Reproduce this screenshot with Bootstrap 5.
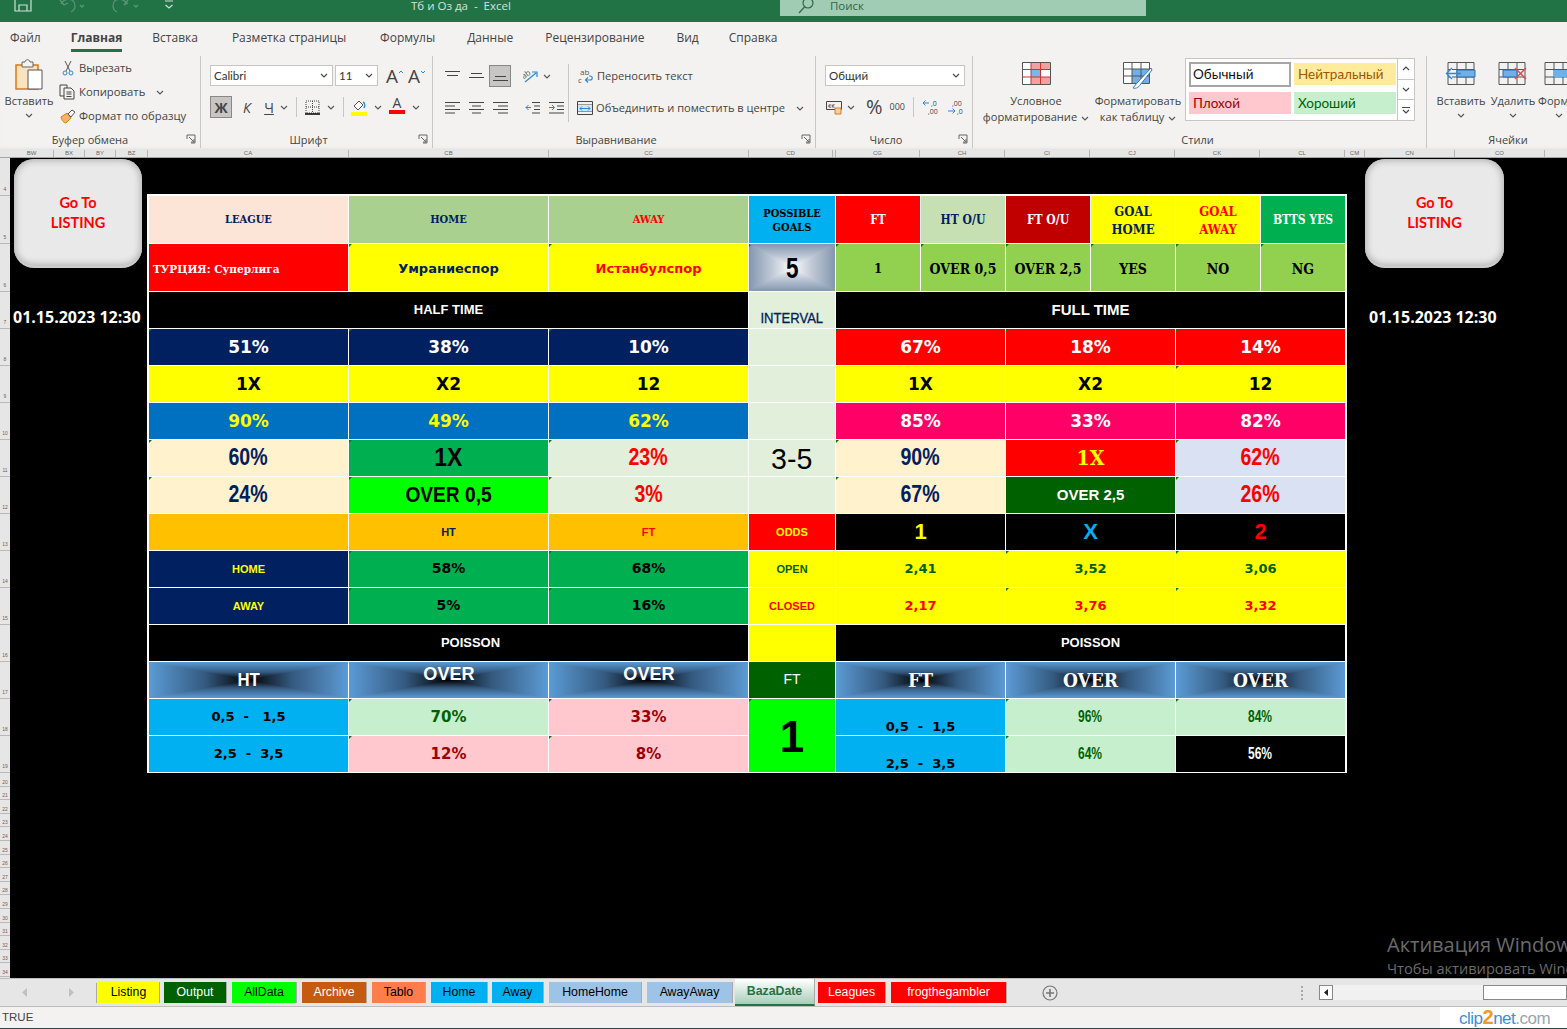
<!DOCTYPE html>
<html lang="ru">
<head>
<meta charset="utf-8">
<title>Excel</title>
<link href="https://cdn.jsdelivr.net/npm/bootstrap@5.3.0/dist/css/bootstrap.min.css" rel="stylesheet">
<style>
html,body{margin:0;height:100%;overflow:hidden;background:#000}
body{font-family:"Open Sans","Noto Sans",sans-serif;font-size:12px;color:#444}
.app{width:1567px;height:1029px;overflow:hidden}
.titlebar{height:22px;background:#217346;color:#d3e3da;flex:none;overflow:hidden}
.tb-icons{width:411px;padding-left:14px;gap:24px;margin-top:-8px}
.tb-title{width:369px;font-size:11.5px;line-height:12px}
.tb-search{width:366px;height:16px;background:#9fccb3;color:#33654c;font-size:11.5px;line-height:12px;padding-left:18px;gap:12px}
.tabsrow{height:30px;background:#f3f2f1;padding:2px 0 0 10px;gap:30px;font-size:12px;flex:none;color:#444}
.tabsrow .on{font-weight:700;color:#444;border-bottom:3px solid #217346;height:26px;margin-top:2px;line-height:24px}
.tg2{margin-left:2px}
.ribbon{height:98px;background:#f3f2f1;flex:none;box-shadow:inset 0 -3px 3px -2px #ddd}
.rg{height:92px;margin-top:4px;border-right:1px solid #c8c6c4;flex:none}
.rg1{width:201px}.rg2{width:232px}.rg3{width:383px}.rg4{width:157px}.rg5{width:454px}.rg6{width:140px;border-right:0}
.rgbody{height:74px;flex:none}
.rglab{height:16px;font-size:11px;line-height:15px;display:grid;grid-template-columns:1fr auto 1fr;align-items:center;color:#444;margin-right:4px;margin-top:1px}
.lp12{padding-right:12px}.lp16{padding-right:16px}.lc26{padding-left:26px}
.lnch{justify-self:end;display:flex}
.bigbtn{display:flex;flex-direction:column;align-items:center;text-align:center;line-height:16px;font-size:11.1px;color:#444}
.chev{flex:none}
.pastebtn{width:48px;margin:3px 0 0 5px}
.pastebtn .lbl{margin-top:2px}
.clipcol{margin:3px 0 0 6px;gap:6px}
.cliprow{height:18px;gap:3px;font-size:11.3px;white-space:nowrap}
.clipic{width:17px;display:flex;justify-content:center}
.fontcol{padding:9px 0 0 9px}
.sel{background:#fff;border:1px solid #c8c6c4;height:21px;padding:0 4px 0 3px;font-size:11.5px;color:#333;font-family:"Lato",sans-serif}
.sel-font{width:123px}.sel-size{width:43px;margin-left:2px}.sel-num{width:140px;margin:9px 0 0 9px}
.fa{font-size:19px;line-height:20px;font-family:"Open Sans",sans-serif;color:#444;position:relative;display:flex;flex:none}
.faa{margin-left:8px;width:22px}.faa2{margin-left:0;width:20px}
.frow2{height:22px;margin-top:10px}
.tbtn{width:22px;height:22px;display:flex;align-items:center;justify-content:center;flex:none;font-size:14px}
.tbtn.act{background:#c8c6c4;border:1px solid #8a8886}
.vsep{width:1px;height:20px;background:#c8c6c4;flex:none}
.aligncol{padding:9px 0 0 7px}
.arow{height:22px}
.arow+.arow{margin-top:10px}
.aic{width:24px;display:flex;justify-content:center;flex:none}
.albox{width:22px;height:22px;background:#c8c6c4;border:1px solid #8a8886;display:flex;align-items:center;justify-content:center;margin-left:1px}
.alsep{width:1px;height:58px;background:#c8c6c4;margin:8px 8px 0 0}
.wraptxt{font-size:11.1px;white-space:nowrap;gap:3px}
.num2{height:22px;margin:10px 0 0 10px}
.pcts{font-size:20px;line-height:1;margin-left:11px}
.thou{font-size:9px;margin-left:7px}
.cfbtn{width:112px;margin:6px 0 0 7px}
.ftbtn{width:92px;margin:6px 0 0 0}
.gal{width:230px;height:63px;margin:2px 0 0 1px;background:#fff;border:1px solid #c8c6c4;font-family:"Lato",sans-serif;font-size:13.5px}
.galgrid{display:grid;grid-template-columns:102px 102px;gap:5px 3px;align-content:start;padding:4px 0 0 3px;width:212px}
.gst{height:22px;line-height:22px;padding-left:4px}
.gst0{background:#fff;outline:2px solid #a6a6a6;outline-offset:-2px;color:#111;margin-top:-1px;height:25px;line-height:25px}
.gst1{background:#ffeb9c;color:#9c5700}.gst2{background:#ffc7ce;color:#9c0006}.gst3{background:#c6efce;color:#006100}
.galsb{width:17px;border-left:1px solid #c8c6c4;margin-left:auto}
.galsb div{flex:1;display:flex;align-items:center;justify-content:center;border-bottom:1px solid #c8c6c4}
.galsb div:last-child{border-bottom:0}
.cellbtn{width:52px;margin:6px 0 0 0;flex:none}
.cellbtn3{margin-left:-6px}
.cellsbody{padding-left:8px}
.colhead{height:8px;background:#e6e6e6;border-bottom:1px solid #a6a6a6;flex:none;font-size:6px;line-height:7px;color:#666;padding-left:10px;font-family:"Liberation Sans",sans-serif}
.colhead div{border-right:1px solid #b5b5b5;text-align:center;flex:none;overflow:hidden}
.w44{width:44px}.w31{width:31px}.w32{width:32px}.w201{width:201px}.w200{width:200px}.w84{width:84px}.w3{width:3px}.w85{width:85px}.w20{width:20px}.w90{width:90px}
.sheet{height:820px;background:#000;flex:none;position:relative;overflow:hidden}
.rowhead{width:10px;background:#e6e6e6;flex:none;font-size:5px;color:#854;font-family:"Liberation Sans",sans-serif}
.rh{border-bottom:1px solid #b8b8b8;height:37px;display:flex;align-items:flex-end;justify-content:center;line-height:7px;padding-bottom:2px}
.rh0{height:38px}.rh1{height:48px}.rhs{height:13.6px;padding-bottom:0}
.side-l{width:137px;flex:none;padding-left:4px}
.side-r{width:138px;flex:none;margin-left:18px}
.gobtn{width:128px;height:109px;margin-top:1px;background:#e9e9e9;border-radius:20px;box-shadow:inset 0 0 6px 2px #b5b5b5;border-bottom:2px solid #ccc;color:#f00;font-family:"Lato",sans-serif;font-weight:700;font-size:14.5px;line-height:20px;text-align:center;padding-top:34px}
.side-r .gobtn{width:139px}
.stamp{color:#fff;font-family:"Open Sans",sans-serif;font-weight:700;font-size:16px;margin-top:39px;line-height:20px;white-space:nowrap}
.side-l .stamp{margin-left:-1px}
.side-r .stamp{margin-left:4px}
.xboard{display:grid;grid-template-columns:199px 199px 199px 86px repeat(6,84px);grid-template-rows:47px 47px repeat(13,36px);gap:1px;background:#fff;padding:2px;width:1200px;height:579px;margin:36px 0 0 0;flex:none;align-self:flex-start}
.c{display:flex;align-items:center;justify-content:center;text-align:center;position:relative;overflow:hidden;white-space:nowrap;line-height:1.1}
.s3{grid-column:span 3}.s6{grid-column:span 6}.s2{grid-column:span 2}.r2{grid-row:span 2}
.t::before{content:"";position:absolute;left:0;top:0;border-style:solid;border-width:3px 3px 0 0;border-color:#008000 transparent transparent transparent}
.slab{font-family:"DejaVu Serif Condensed","DejaVu Serif",serif;font-weight:700}
.wide{font-family:"DejaVu Sans",sans-serif;font-weight:700}
.narrow{font-family:"Liberation Sans",sans-serif;font-weight:700}
.arial{font-family:"Liberation Sans",sans-serif;font-weight:700}
.sq{display:inline-block}
.f11{font-size:11px}.f117{font-size:11.7px}.f12{font-size:12px}.f13{font-size:13px}.f14{font-size:14px}.f15{font-size:15px}.f17{font-size:17px}.f19{font-size:19px}
.hd{padding-top:2px}
.numb{font-size:23px}.numb .sq{transform:scaleX(.85)}
.bigx{font-size:25px}.bigx .sq{transform:scaleX(.92)}
.overb{font-size:22px}.overb .sq{transform:scaleX(.87)}
.tfive{font-size:30px;font-weight:400}.tfive .sq{transform:scaleX(.95)}
.five{font-size:30px}.five .sq{transform:scaleX(.75)}
.intv{font-size:14.5px;font-weight:400;-webkit-text-stroke:.3px currentColor}.intv .sq{transform:scaleX(.9)}
.ovr{font-size:19px}.ovr .sq{transform:scaleX(.95)}
.htt{font-size:19px}.htt .sq{transform:scaleX(.88)}
.pctn{font-size:16px}.pctn .sq{transform:scaleX(.75)}
.slabx{font-family:"DejaVu Serif Condensed","DejaVu Serif",serif;font-weight:700;font-size:21px}
.xl{font-size:22px}
.huge{font-size:44px}
.lh18{line-height:18px}.lh14{line-height:14px}
.bgleague{background:#fce4d6;color:#002060}.bgsage{background:#a9d08e;color:#002060}.bgsage2{background:#c6e0b4;color:#002060}.bgbrick{background:#c00000;color:#fff}.bgbtts{background:#00b050;color:#fff}.bgint{background:#e2efda;color:#002060}
.bgk{background:#000;color:#fff}.bgn{background:#002060;color:#fff}.bgy{background:#ff0;color:#000}.bgr{background:#f00;color:#fff}
.bgblue{background:#0070c0;color:#ff0}.bgrose{background:#f06;color:#fff}.bgcream{background:#fff2cc;color:#002060}
.bgg{background:#00b050;color:#000}.bgmint{background:#e2efda;color:#f00}.bgsky{background:#d9e1f2;color:#f00}
.bgamb{background:#ffc000;color:#002060}.bgcy{background:#00b0f0;color:#000}.bgpa{background:#c6efce;color:#006100}.bgpi{background:#ffc7ce;color:#9c0006}
.bgdg{background:#006100;color:#fff}.bglime{background:#0f0;color:#000}.bgol{background:#92d050;color:#000}
.box{background:linear-gradient(90deg,var(--e),var(--m) 28%,var(--k) 50%,var(--m) 72%,var(--e))}
.box::after{content:"";position:absolute;inset:0;background:linear-gradient(180deg,var(--e),var(--m) 28%,var(--k) 50%,var(--m) 72%,var(--e));clip-path:polygon(0 0,100% 0,0 100%,100% 100%)}
.box>span{position:relative;z-index:1}
.boxb{--e:#5b9bd5;--m:#355a80;--k:#000;color:#fff}
.boxs{--e:#8497b0;--m:#c2cbd8;--k:#fff;color:#000}
.pt{align-items:flex-end;padding-bottom:1px}
.ptop{align-items:flex-start;padding-top:2px}
.pois{padding-left:44px}
.tx-y{color:#ff0}.tx-r{color:#f00}.tx-n{color:#002060}.tx-g{color:#006100}.tx-c{color:#00b0f0}.tx-k{color:#000}
.wm{position:absolute;left:1387px;top:774px;color:#6b6b6b;white-space:nowrap;font-family:"Open Sans",sans-serif;pointer-events:none}
.wm1{font-size:20px;line-height:26px}.wm2{font-size:14.6px;line-height:20px}
.sheettabs{height:29px;background:#e6e6e6;border-top:1px solid #bdbdbd;border-bottom:1px solid #bdbdbd;flex:none;font-family:"Liberation Sans",sans-serif;font-size:12.3px}
.navarr{width:97px;flex:none;gap:42px;padding-left:22px;border-right:1px solid #aaa;height:20px}
.st{height:21px;line-height:20px;text-align:center;margin-left:1px;flex:none;border-right:1px solid #aaa;box-shadow:2px 0 0 #e6e6e6}
.st1{width:62px;background:#ff0;color:#000;margin-right:3px}.st2{width:63px;background:#006100;color:#fff;margin-right:4px}.st3{width:65px;background:#0f0;color:#000;margin-right:4px}.st4{width:65px;background:#c55a11;color:#fff;margin-right:4px}.st5{width:54px;background:#ff7c4c;color:#000;margin-right:4px}.st6{width:57px;background:#00b0f0;color:#000;margin-right:3px}.st7{width:52px;background:#00b0f0;color:#000;margin-right:4px}.st8{width:93px;background:#9dc3e6;color:#000;margin-right:4px}.st9{width:86px;background:#9dc3e6;color:#000;margin-right:1px}
.sta{width:80px;height:27px;line-height:25px;background:linear-gradient(180deg,#fff,#a9cdb9);color:#217346;font-weight:700;border-bottom:2px solid #217346;margin-top:0;margin-right:2px}
.stb{width:68px;background:#f00;color:#fff;margin-right:4px}.stc{width:116px;background:#f00;color:#fff}
.addb{margin-left:35px;width:259px;flex:none}
.gdots{width:3px;height:14px;border-left:2px dotted #aaa;flex:none;margin-right:15px}
.hscroll{flex:1;height:15px;background:#f1f1f1}
.harr{width:14px;height:15px;background:#fff;border:1px solid #8a8886;display:flex;align-items:center;justify-content:center}
.hthumb{width:84px;height:15px;background:#fff;border:1px solid #8a8886;margin-left:auto}
.statusbar{height:22px;background:#f3f2f1;border-bottom:1px solid #2a4a4a;flex:none;font-family:"Liberation Sans",sans-serif;font-size:11.5px;color:#444;padding-left:2px}
.clip{margin-left:auto;width:127px;height:21px;background:#fff;font-family:"Liberation Sans",sans-serif;font-size:17px;letter-spacing:-.5px;padding-left:19px;line-height:21px;font-weight:400}
.cl-b{color:#3a8fd9}.cl-o{color:#f39a1e;font-weight:700;font-size:20px}.cl-g{color:#9aa5ad}
</style>
</head>
<body>
<div class="app d-flex flex-column">
  <div class="titlebar d-flex">
    <div class="tb-icons d-flex align-items-start">
      <svg width="18" height="22" viewBox="0 0 18 22" fill="none" stroke="#cfe0d6" stroke-width="1.2"><path d="M1 1h13l3 3v15H1z"/><path d="M5 19v-6h8v6M5 1v5h8V1"/></svg>
      <svg width="30" height="22" viewBox="0 0 30 22" fill="none" stroke="#5c9477" stroke-width="1.3"><path d="M4 8l4 5 4-2M5 12c4-7 14-6 14 2 0 3-2 5-4 6"/><path d="M24 13l2 2 2-2"/></svg>
      <svg width="30" height="22" viewBox="0 0 30 22" fill="none" stroke="#5c9477" stroke-width="1.3"><path d="M18 8l-4 5 4-2M17 12C13 5 3 6 3 14c0 3 2 5 4 6"/><path d="M24 13l2 2 2-2"/></svg>
      <svg width="10" height="22" viewBox="0 0 10 22" fill="none" stroke="#cfe0d6" stroke-width="1.2"><path d="M1 9h8M1.5 13l3.5 3 3.500-3"/></svg>
    </div>
    <div class="tb-title text-nowrap">Тб и Оз да&nbsp; -&nbsp; Excel</div>
    <div class="tb-search d-flex">
      <svg width="16" height="16" viewBox="0 0 16 16" fill="none" stroke="#33654c" stroke-width="1.2" class="mt-n1"><circle cx="10" cy="3" r="5"/><path d="M6.500 7L1 13"/></svg>
      <span class="ms-1">Поиск</span>
    </div>
  </div>

  <div class="tabsrow d-flex align-items-center">
    <span>Файл</span><span class="on">Главная</span><span>Вставка</span><span class="ms-1">Разметка страницы</span><span class="ms-1">Формулы</span><span class="tg2">Данные</span><span class="tg2">Рецензирование</span><span class="tg2">Вид</span><span>Справка</span>
  </div>

  <div class="ribbon d-flex">
    <!-- clipboard -->
    <div class="rg rg1 d-flex flex-column">
      <div class="rgbody d-flex">
        <div class="bigbtn pastebtn">
          <svg width="30" height="32" viewBox="0 0 30 32"><path d="M2 6h22v24H2z" fill="#fbe3c0" stroke="#d97a14" stroke-width="1.500"/><path d="M8 3h3c0-3 5-3 5 0h3v5H8z" fill="#f3f2f1" stroke="#666"/><path d="M14 11h14v19H14z" fill="#fff" stroke="#555"/></svg>
          <span class="lbl">Вставить</span>
          <svg class="chev mt-1" width="8" height="5" viewBox="0 0 8 5" fill="none" stroke="#555" stroke-width="1.100"><path d="M1 1l3 3 3-3"/></svg>
        </div>
        <div class="clipcol d-flex flex-column">
          <div class="cliprow d-flex align-items-center"><span class="clipic"><svg width="12" height="16" viewBox="0 0 12 16" fill="none" stroke="#555"><path d="M3 1l5 10M9 1L4 11"/><circle cx="3" cy="13" r="2" stroke="#2b88d8"/><circle cx="9" cy="13" r="2" stroke="#2b88d8"/></svg></span><span>Вырезать</span></div>
          <div class="cliprow d-flex align-items-center"><span class="clipic"><svg width="17" height="16" viewBox="0 0 17 16" fill="none" stroke="#444"><path d="M5 12H1V1h7v3"/><path d="M5 4h7l3 3v8H5zM7.500 8h5M7.500 10h5M7.500 12.500h5"/></svg></span><span>Копировать</span><svg class="ms-2" width="8" height="5" viewBox="0 0 8 5" fill="none" stroke="#555" stroke-width="1.100"><path d="M1 1l3 3 3-3"/></svg></div>
          <div class="cliprow d-flex align-items-center"><span class="clipic"><svg width="16" height="15" viewBox="0 0 16 15"><path d="M1 8l6-4 4 5-5 5c-2 0-4-2-5-6z" fill="#f6b26b" stroke="#d97a14"/><path d="M8 5l4-4 3 2-4 5z" fill="#fff" stroke="#555"/></svg></span><span>Формат по образцу</span></div>
        </div>
      </div>
      <div class="rglab"><span></span><span class="lp16">Буфер обмена</span><span class="lnch"><svg width="10" height="10" viewBox="0 0 10 10" fill="none" stroke="#666"><path d="M1 5V1h8v8H5M3 3l5 5M8 5v3H5"/></svg></span></div>
    </div>
    <!-- font -->
    <div class="rg rg2 d-flex flex-column">
      <div class="rgbody fontcol">
        <div class="d-flex align-items-center">
          <div class="sel sel-font d-flex align-items-center justify-content-between"><span>Calibri</span><svg width="8" height="5" viewBox="0 0 8 5" fill="none" stroke="#444" stroke-width="1.100"><path d="M1 1l3 3 3-3"/></svg></div>
          <div class="sel sel-size d-flex align-items-center justify-content-between"><span>11</span><svg width="8" height="5" viewBox="0 0 8 5" fill="none" stroke="#444" stroke-width="1.100"><path d="M1 1l3 3 3-3"/></svg></div>
          <span class="fa faa">A<svg width="6" height="4" viewBox="0 0 6 4" fill="none" stroke="#2b88d8" class="mt-1"><path d="M1 3l2-2 2 2"/></svg></span>
          <span class="fa faa2">A<svg width="6" height="4" viewBox="0 0 6 4" fill="none" stroke="#2b88d8" class="mt-1"><path d="M1 1l2 2 2-2"/></svg></span>
        </div>
        <div class="frow2 d-flex align-items-center">
          <span class="tbtn act fw-bold">Ж</span>
          <span class="tbtn ms-1 fst-italic">К</span>
          <span class="tbtn text-decoration-underline">Ч</span>
          <svg class="chev" width="8" height="5" viewBox="0 0 8 5" fill="none" stroke="#555" stroke-width="1.100"><path d="M1 1l3 3 3-3"/></svg>
          <span class="vsep ms-2"></span>
          <span class="tbtn ms-1"><svg width="15" height="15" viewBox="0 0 15 15" fill="none" stroke="#444" stroke-dasharray="1 1"><path d="M1 1h13v12H1zM7.500 1v12M1 7h13"/><path d="M0 14h15" stroke="#000" stroke-dasharray="none" stroke-width="1.500"/></svg></span>
          <svg class="chev ms-1" width="8" height="5" viewBox="0 0 8 5" fill="none" stroke="#555" stroke-width="1.100"><path d="M1 1l3 3 3-3"/></svg>
          <span class="vsep ms-2"></span>
          <span class="tbtn ms-1"><svg width="16" height="17" viewBox="0 0 16 17"><path d="M3 7l5-5 4 4-5 5z" fill="#fff" stroke="#555"/><path d="M12 3c2 1 2 4 1 6" fill="none" stroke="#2b88d8" stroke-width="1.500"/><path d="M0 13h16v4H0z" fill="#ff0"/></svg></span>
          <svg class="chev ms-1" width="8" height="5" viewBox="0 0 8 5" fill="none" stroke="#555" stroke-width="1.100"><path d="M1 1l3 3 3-3"/></svg>
          <span class="tbtn ms-1 d-block text-center lh-1 pt-0">A<svg class="d-block" width="22" height="5" viewBox="0 0 22 5"><path d="M3 0h16v4H3z" fill="#f00"/></svg></span>
          <svg class="chev ms-1" width="8" height="5" viewBox="0 0 8 5" fill="none" stroke="#555" stroke-width="1.100"><path d="M1 1l3 3 3-3"/></svg>
        </div>
      </div>
      <div class="rglab"><span></span><span class="lp12">Шрифт</span><span class="lnch"><svg width="10" height="10" viewBox="0 0 10 10" fill="none" stroke="#666"><path d="M1 5V1h8v8H5M3 3l5 5M8 5v3H5"/></svg></span></div>
    </div>
    <!-- align -->
    <div class="rg rg3 d-flex flex-column">
      <div class="rgbody d-flex">
        <div class="aligncol">
          <div class="arow d-flex align-items-center">
            <span class="aic"><svg width="15" height="10" viewBox="0 0 15 10" stroke="#444"><path d="M0 .5h15M2 4.500h11"/></svg></span>
            <span class="aic"><svg width="15" height="10" viewBox="0 0 15 10" stroke="#444"><path d="M2 2.500h11M0 6.500h15"/></svg></span>
            <span class="albox"><svg width="15" height="10" viewBox="0 0 15 10" stroke="#444"><path d="M2 5.500h11M0 9.500h15"/></svg></span>
            <span class="aic ms-2"><svg width="16" height="14" viewBox="0 0 16 14"><text x="0" y="8" font-size="8" fill="#555" transform="rotate(-35 4 8)" font-family="Open Sans">ab</text><path d="M2 13l11-9M9 3h5v5" fill="none" stroke="#2b88d8" stroke-width="1.200"/></svg></span>
            <svg class="chev ms-0" width="8" height="5" viewBox="0 0 8 5" fill="none" stroke="#555" stroke-width="1.100"><path d="M1 1l3 3 3-3"/></svg>
          </div>
          <div class="arow d-flex align-items-center">
            <span class="aic"><svg width="15" height="12" viewBox="0 0 15 12" stroke="#444"><path d="M0 .5h15M0 4h10M0 7.500h15M0 11h10"/></svg></span>
            <span class="aic"><svg width="15" height="12" viewBox="0 0 15 12" stroke="#444"><path d="M0 .5h15M3 4h9M0 7.500h15M3 11h9"/></svg></span>
            <span class="aic"><svg width="15" height="12" viewBox="0 0 15 12" stroke="#444"><path d="M0 .5h15M5 4h10M0 7.500h15M5 11h10"/></svg></span>
            <span class="aic ms-2"><svg width="15" height="12" viewBox="0 0 15 12" fill="none"><path d="M7 .5h8M9 4h6M9 7.500h6M7 11h8" stroke="#444"/><path d="M6 5.500H1M3.500 3L1 5.500 3.500 8" stroke="#2b88d8"/></svg></span>
            <span class="aic"><svg width="15" height="12" viewBox="0 0 15 12" fill="none"><path d="M0 .5h15M8 4h7M8 7.500h7M0 11h15" stroke="#444"/><path d="M0 5.500h5M3 3l2.500 2.500L3 8" stroke="#2b88d8"/></svg></span>
          </div>
        </div>
        <span class="alsep"></span>
        <div class="aligncol ps-0">
          <div class="arow d-flex align-items-center wraptxt"><svg width="17" height="16" viewBox="0 0 17 16"><text x="3" y="7" font-size="8" fill="#555" font-family="Open Sans">ab</text><text x="1" y="15" font-size="8" fill="#555" font-family="Open Sans">c</text><path d="M9 12h4c3 0 3-4 0-4h-1M11 9.500L8.500 12 11 14.500" fill="none" stroke="#2b88d8" stroke-width="1.100"/></svg><span>Переносить текст</span></div>
          <div class="arow d-flex align-items-center wraptxt"><svg width="16" height="14" viewBox="0 0 16 14" fill="none"><path d="M.5.500h15v13H.5zM.5 4h15M.5 10.500h15" stroke="#444"/><path d="M1 4h14v6.500H1z" fill="#cfe6f8"/><path d="M3 7.500h10M5 5.500L3 7.500l2 2M11 5.500l2 2-2 2" stroke="#2b88d8"/></svg><span>Объединить и поместить в центре</span><svg class="chev ms-2" width="8" height="5" viewBox="0 0 8 5" fill="none" stroke="#555" stroke-width="1.100"><path d="M1 1l3 3 3-3"/></svg></div>
        </div>
      </div>
      <div class="rglab"><span></span><span class="lp12">Выравнивание</span><span class="lnch"><svg width="10" height="10" viewBox="0 0 10 10" fill="none" stroke="#666"><path d="M1 5V1h8v8H5M3 3l5 5M8 5v3H5"/></svg></span></div>
    </div>
    <!-- number -->
    <div class="rg rg4 d-flex flex-column">
      <div class="rgbody">
        <div class="sel sel-num d-flex align-items-center justify-content-between"><span>Общий</span><svg width="8" height="5" viewBox="0 0 8 5" fill="none" stroke="#444" stroke-width="1.100"><path d="M1 1l3 3 3-3"/></svg></div>
        <div class="num2 d-flex align-items-center">
          <svg width="17" height="15" viewBox="0 0 17 15" fill="none"><path d="M.5 1.500h15v8H.5z" stroke="#444"/><text x="2" y="8" font-size="6" fill="#444" font-family="Open Sans">€€</text><path d="M9 8h6v6H9z" fill="#f8cfa0" stroke="#d97a14"/></svg>
          <svg class="chev ms-1" width="8" height="5" viewBox="0 0 8 5" fill="none" stroke="#555" stroke-width="1.100"><path d="M1 1l3 3 3-3"/></svg>
          <span class="pcts">%</span>
          <span class="thou">000</span>
          <span class="vsep ms-2"></span>
          <svg class="ms-2" width="17" height="16" viewBox="0 0 17 16" fill="none"><text x="9" y="7" font-size="7" fill="#444" font-family="Open Sans">,0</text><text x="6" y="15" font-size="7" fill="#444" font-family="Open Sans">,00</text><path d="M7 4H1M3.500 1.500L1 4l2.500 2.500" stroke="#2b88d8"/></svg>
          <svg class="ms-2" width="17" height="16" viewBox="0 0 17 16" fill="none"><text x="5" y="7" font-size="7" fill="#444" font-family="Open Sans">,00</text><text x="10" y="15" font-size="7" fill="#444" font-family="Open Sans">,0</text><path d="M1 12h7M5.500 9.500L8 12l-2.500 2.500" stroke="#2b88d8"/></svg>
        </div>
      </div>
      <div class="rglab"><span></span><span class="lp12">Число</span><span class="lnch"><svg width="10" height="10" viewBox="0 0 10 10" fill="none" stroke="#666"><path d="M1 5V1h8v8H5M3 3l5 5M8 5v3H5"/></svg></span></div>
    </div>
    <!-- styles -->
    <div class="rg rg5 d-flex flex-column">
      <div class="rgbody d-flex">
        <div class="bigbtn cfbtn">
          <svg width="29" height="23" viewBox="0 0 29 23"><path d="M.5.500h28v22H.5z" fill="#fff" stroke="#555"/><path d="M9 1h19v6H9zM9 15h19v7H9z" fill="#f4a0a0"/><path d="M9 8h9v7H9z" fill="#7db7e8"/><path d="M.5 7.500h28M.5 15h28M9 .5v22M18.500.500v22" fill="none" stroke="#c33"/></svg>
          <span class="mt-2">Условное</span>
          <span class="text-nowrap">форматирование<svg class="ms-1 align-middle" width="8" height="5" viewBox="0 0 8 5" fill="none" stroke="#555" stroke-width="1.100"><path d="M1 1l3 3 3-3"/></svg></span>
        </div>
        <div class="bigbtn ftbtn">
          <svg width="30" height="27" viewBox="0 0 30 27" class="mb-n1"><path d="M.5.500h26v21H.5z" fill="#fff" stroke="#555"/><path d="M9 7h17v14H9z" fill="#6fb0e6"/><path d="M.5 7h26M.5 14h26M9 .5v21M18 .5v21" fill="none" stroke="#555"/><path d="M28 6L14 21l-4 5c3 1 6-1 7-3L29 8z" fill="#fff" stroke="#3a7bbf"/></svg>
          <span class="mt-1">Форматировать</span>
          <span class="text-nowrap">как таблицу<svg class="ms-1 align-middle" width="8" height="5" viewBox="0 0 8 5" fill="none" stroke="#555" stroke-width="1.100"><path d="M1 1l3 3 3-3"/></svg></span>
        </div>
        <div class="gal d-flex">
          <div class="galgrid">
            <div class="gst gst0">Обычный</div><div class="gst gst1">Нейтральный</div>
            <div class="gst gst2">Плохой</div><div class="gst gst3">Хороший</div>
          </div>
          <div class="galsb d-flex flex-column">
            <div><svg width="8" height="5" viewBox="0 0 8 5" fill="none" stroke="#444" stroke-width="1.100"><path d="M1 4l3-3 3 3"/></svg></div>
            <div><svg width="8" height="5" viewBox="0 0 8 5" fill="none" stroke="#444" stroke-width="1.100"><path d="M1 1l3 3 3-3"/></svg></div>
            <div><svg width="8" height="7" viewBox="0 0 8 7" fill="none" stroke="#444" stroke-width="1.100"><path d="M0 .5h8M1 3l3 3 3-3"/></svg></div>
          </div>
        </div>
      </div>
      <div class="rglab"><span></span><span>Стили</span><span></span></div>
    </div>
    <!-- cells -->
    <div class="rg rg6 d-flex flex-column">
      <div class="rgbody cellsbody d-flex">
        <div class="bigbtn cellbtn">
          <svg width="32" height="23" viewBox="0 0 32 23" fill="none"><path d="M3 .5h26v22H3zM3 7.500h26M3 15h26M12 .5v22M21 .5v22" stroke="#555"/><path d="M12 8h18v7H12z" fill="#6fb0e6" stroke="#2b6cb0"/><path d="M16 11.500H2M7 6l-5.500 5.500L7 17" stroke="#2b88d8" stroke-width="1.300" fill="#f3f2f1"/></svg>
          <span class="mt-2">Вставить</span>
          <svg class="chev mt-1" width="8" height="5" viewBox="0 0 8 5" fill="none" stroke="#555" stroke-width="1.100"><path d="M1 1l3 3 3-3"/></svg>
        </div>
        <div class="bigbtn cellbtn">
          <svg width="30" height="23" viewBox="0 0 30 23" fill="none"><path d="M1 .5h26v22H1zM1 7.500h26M1 15h26M10 .5v22M19 .5v22" stroke="#555"/><path d="M5 8h14v7H5z" fill="#6fb0e6" stroke="#2b6cb0"/><path d="M17 6l11 11M28 6L17 17" stroke="#e24a4a" stroke-width="1.500"/></svg>
          <span class="mt-2">Удалить</span>
          <svg class="chev mt-1" width="8" height="5" viewBox="0 0 8 5" fill="none" stroke="#555" stroke-width="1.100"><path d="M1 1l3 3 3-3"/></svg>
        </div>
        <div class="bigbtn cellbtn cellbtn3">
          <svg width="30" height="23" viewBox="0 0 30 23" fill="none"><path d="M1 .5h28v22H1zM1 7.500h28M1 15h28M10 .5v22M19 .5v22" stroke="#555"/><path d="M10 8h19v7H10z" fill="#6fb0e6"/></svg>
          <span class="mt-2 text-nowrap">Формат</span>
          <svg class="chev mt-1" width="8" height="5" viewBox="0 0 8 5" fill="none" stroke="#555" stroke-width="1.100"><path d="M1 1l3 3 3-3"/></svg>
        </div>
      </div>
      <div class="rglab"><span></span><span class="lc26">Ячейки</span><span></span></div>
    </div>
  </div>

  <div class="colhead d-flex">
    <div class="w44">BW</div><div class="w31">BX</div><div class="w31">BY</div><div class="w32">BZ</div><div class="w201">CA</div><div class="w200">CB</div><div class="w200">CC</div><div class="w84">CD</div><div class="w3"></div><div class="w84">CG</div><div class="w85">CH</div><div class="w85">CI</div><div class="w85">CJ</div><div class="w85">CK</div><div class="w85">CL</div><div class="w20">CM</div><div class="w90">CN</div><div class="w90">CO</div>
  </div>

  <div class="sheet d-flex">
    <div class="rowhead">
      <div class="rh rh0">4</div><div class="rh rh1">5</div><div class="rh rh1">6</div><div class="rh">7</div><div class="rh">8</div><div class="rh">9</div><div class="rh">10</div><div class="rh">11</div><div class="rh">12</div><div class="rh">13</div><div class="rh">14</div><div class="rh">15</div><div class="rh">16</div><div class="rh">17</div><div class="rh">18</div><div class="rh">19</div>
      <div class="rh rhs">20</div><div class="rh rhs">21</div><div class="rh rhs">22</div><div class="rh rhs">23</div><div class="rh rhs">24</div><div class="rh rhs">25</div><div class="rh rhs">26</div><div class="rh rhs">27</div><div class="rh rhs">28</div><div class="rh rhs">29</div><div class="rh rhs">30</div><div class="rh rhs">31</div><div class="rh rhs">32</div><div class="rh rhs">33</div><div class="rh rhs">34</div>
    </div>
    <div class="side-l">
      <div class="gobtn">Go To<br>LISTING</div>
      <div class="stamp">01.15.2023 12:30</div>
    </div>
    <div class="xboard">
      <div class="c slab f11 hd bgleague">LEAGUE</div>
      <div class="c slab f11 hd bgsage">HOME</div>
      <div class="c slab f11 hd bgsage tx-r">AWAY</div>
      <div class="c slab f11 hd bgcy lh14">POSSIBLE<br>GOALS</div>
      <div class="c slab f12 hd bgr">FT</div>
      <div class="c slab f12 hd bgsage2">HT O/U</div>
      <div class="c slab f12 hd bgbrick">FT O/U</div>
      <div class="c slab f13 hd bgy tx-n lh18">GOAL<br>HOME</div>
      <div class="c slab f13 hd bgy tx-r lh18">GOAL<br>AWAY</div>
      <div class="c slab f12 hd bgbtts">BTTS YES</div>

      <div class="c t slab f117 bgr justify-content-start ps-1 pt-1">ТУРЦИЯ: Суперлига</div>
      <div class="c t wide f13 bgy tx-n pt-1">Умраниеспор</div>
      <div class="c t wide f13 bgy tx-r pt-1">Истанбулспор</div>
      <div class="c t box boxs narrow five"><span class="sq">5</span></div>
      <div class="c t slab f13 bgol pt-1">1</div>
      <div class="c t slab f14 bgol pt-1">OVER 0,5</div>
      <div class="c t slab f14 bgol pt-1">OVER 2,5</div>
      <div class="c t slab f14 bgol pt-1">YES</div>
      <div class="c t slab f14 bgol pt-1">NO</div>
      <div class="c t slab f14 bgol pt-1">NG</div>

      <div class="c s3 arial f13 bgk">HALF TIME</div>
      <div class="c narrow intv pt bgint"><span class="sq">INTERVAL</span></div>
      <div class="c s6 arial f15 bgk">FULL TIME</div>

      <div class="c t wide f17 bgn">51%</div><div class="c t wide f17 bgn">38%</div><div class="c t wide f17 bgn">10%</div>
      <div class="c bgmint"></div>
      <div class="c s2 t wide f17 bgr">67%</div><div class="c s2 t wide f17 bgr">18%</div><div class="c s2 t wide f17 bgr">14%</div>

      <div class="c wide f17 bgy">1X</div><div class="c wide f17 bgy">X2</div><div class="c wide f17 bgy">12</div>
      <div class="c bgmint"></div>
      <div class="c s2 wide f17 bgy">1X</div><div class="c s2 wide f17 bgy">X2</div><div class="c s2 t wide f17 bgy">12</div>

      <div class="c wide f17 bgblue">90%</div><div class="c wide f17 bgblue">49%</div><div class="c wide f17 bgblue">62%</div>
      <div class="c bgmint"></div>
      <div class="c s2 wide f17 bgrose">85%</div><div class="c s2 wide f17 bgrose">33%</div><div class="c s2 wide f17 bgrose">82%</div>

      <div class="c t narrow numb bgcream"><span class="sq">60%</span></div><div class="c t narrow bigx bgg"><span class="sq">1X</span></div><div class="c t narrow numb bgmint"><span class="sq">23%</span></div>
      <div class="c narrow tfive bgmint tx-k"><span class="sq">3-5</span></div>
      <div class="c s2 t narrow numb bgcream"><span class="sq">90%</span></div><div class="c s2 slabx bgr tx-y">1X</div><div class="c s2 t narrow numb bgsky"><span class="sq">62%</span></div>

      <div class="c t narrow numb bgcream"><span class="sq">24%</span></div><div class="c t narrow overb bglime"><span class="sq">OVER 0,5</span></div><div class="c t narrow numb bgmint"><span class="sq">3%</span></div>
      <div class="c bgmint"></div>
      <div class="c s2 t narrow numb bgcream"><span class="sq">67%</span></div><div class="c s2 arial f15 bgdg">OVER 2,5</div><div class="c s2 t narrow numb bgsky"><span class="sq">26%</span></div>

      <div class="c bgamb"></div><div class="c arial f11 bgamb">HT</div><div class="c arial f11 bgamb tx-r">FT</div>
      <div class="c arial f11 bgr tx-y">ODDS</div>
      <div class="c s2 arial xl bgk tx-y">1</div><div class="c s2 arial xl bgk tx-c">X</div><div class="c s2 arial xl bgk tx-r">2</div>

      <div class="c arial f11 bgn tx-y">HOME</div><div class="c t wide f14 bgg">58%</div><div class="c t wide f14 bgg">68%</div>
      <div class="c arial f11 bgy tx-g">OPEN</div>
      <div class="c s2 wide f13 bgy tx-g">2,41</div><div class="c s2 t wide f13 bgy tx-g">3,52</div><div class="c s2 t wide f13 bgy tx-g">3,06</div>

      <div class="c arial f11 bgn tx-y">AWAY</div><div class="c t wide f14 bgg">5%</div><div class="c t wide f14 bgg">16%</div>
      <div class="c arial f11 bgy tx-r">CLOSED</div>
      <div class="c s2 wide f13 bgy tx-r">2,17</div><div class="c s2 t wide f13 bgy tx-r">3,76</div><div class="c s2 t wide f13 bgy tx-r">3,32</div>

      <div class="c s3 arial f13 bgk pois">POISSON</div><div class="c bgy"></div><div class="c s6 arial f13 bgk">POISSON</div>

      <div class="c box boxb narrow htt"><span class="sq">HT</span></div>
      <div class="c box boxb narrow ovr ptop"><span class="sq">OVER</span></div>
      <div class="c box boxb narrow ovr ptop"><span class="sq">OVER</span></div>
      <div class="c arial fw-normal f14 bgdg">FT</div>
      <div class="c s2 box boxb slab f19"><span>FT</span></div>
      <div class="c s2 box boxb slab f19"><span>OVER</span></div>
      <div class="c s2 box boxb slab f19"><span>OVER</span></div>

      <div class="c wide f13 bgcy">0,5&nbsp; -&nbsp;&nbsp; 1,5</div>
      <div class="c t wide f15 bgpa">70%</div><div class="c t wide f15 bgpi">33%</div>
      <div class="c t r2 arial huge bglime pt-1">1</div>
      <div class="c s2 wide f13 bgcy pt">0,5&nbsp; -&nbsp; 1,5</div>
      <div class="c s2 t narrow pctn bgpa"><span class="sq">96%</span></div><div class="c s2 t narrow pctn bgpa"><span class="sq">84%</span></div>

      <div class="c wide f13 bgcy">2,5&nbsp; -&nbsp; 3,5</div>
      <div class="c t wide f15 bgpi">12%</div><div class="c t wide f15 bgpi">8%</div>
      <div class="c s2 wide f13 bgcy pt">2,5&nbsp; -&nbsp; 3,5</div>
      <div class="c s2 t narrow pctn bgpa"><span class="sq">64%</span></div><div class="c s2 narrow pctn bgk"><span class="sq">56%</span></div>
    </div>
    <div class="side-r">
      <div class="gobtn">Go To<br>LISTING</div>
      <div class="stamp">01.15.2023 12:30</div>
    </div>
    <div class="wm"><div class="wm1">Активация Windows</div><div class="wm2">Чтобы активировать Windows</div></div>
  </div>

  <div class="sheettabs d-flex align-items-center">
    <div class="navarr d-flex align-items-center">
      <svg width="5" height="9" viewBox="0 0 5 9"><path d="M5 0v9L0 4.500z" fill="#c0c0c0"/></svg>
      <svg width="5" height="9" viewBox="0 0 5 9"><path d="M0 0v9l5-4.500z" fill="#c0c0c0"/></svg>
    </div>
    <div class="st st1">Listing</div><div class="st st2">Output</div><div class="st st3">AllData</div><div class="st st4">Archive</div><div class="st st5">Tablo</div><div class="st st6">Home</div><div class="st st7">Away</div><div class="st st8">HomeHome</div><div class="st st9">AwayAway</div><div class="st sta">BazaDate</div><div class="st stb">Leagues</div><div class="st stc">frogthegambler</div>
    <div class="addb"><svg width="16" height="16" viewBox="0 0 16 16" fill="none" stroke="#777" stroke-width="1.200"><circle cx="8" cy="8" r="7"/><path d="M8 4v8M4 8h8" stroke-width="1.600"/></svg></div>
    <span class="gdots"></span>
    <div class="hscroll d-flex">
      <div class="harr"><svg width="4" height="7" viewBox="0 0 4 7"><path d="M4 0v7L0 3.500z" fill="#222"/></svg></div>
      <div class="hthumb"></div>
    </div>
  </div>

  <div class="statusbar d-flex align-items-center">
    <span>TRUE</span>
    <div class="clip"><span class="cl-b">clip</span><span class="cl-o">2</span><span class="cl-b">net</span><span class="cl-g">.com</span></div>
  </div>
</div>
<script src="https://cdn.jsdelivr.net/npm/bootstrap@5.3.0/dist/js/bootstrap.bundle.min.js"></script>
</body>
</html>
